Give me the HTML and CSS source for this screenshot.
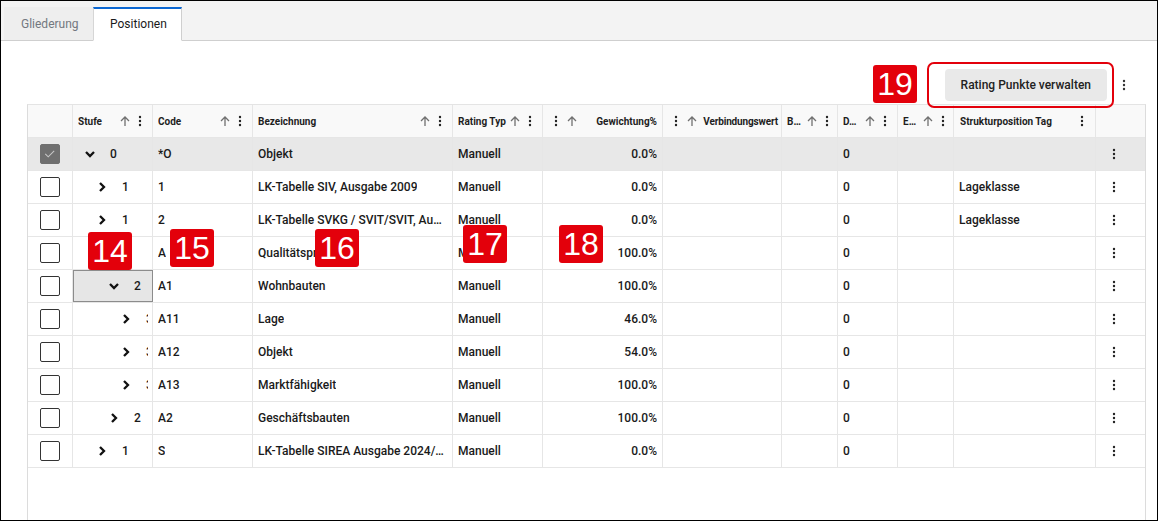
FILE: index.html
```html
<!DOCTYPE html>
<html lang="de">
<head>
<meta charset="utf-8">
<title>Positionen</title>
<link rel="stylesheet" href="styles.css">
</head>
<body>
<div class="frame">
  <div class="tabbar">
    <div class="tab">Gliederung</div>
    <div class="tab active">Positionen</div>
  </div>
  <div class="content">
    <div class="toolbar">
      <button class="btn">Rating Punkte verwalten</button>
      <span class="tool-kebab"><svg width="4" height="12" viewBox="0 0 4 12"><circle cx="2" cy="2" r="1.2"/><circle cx="2" cy="6" r="1.2"/><circle cx="2" cy="10" r="1.2"/></svg></span>
    </div>
    <div class="grid">
      <div class="row head">
        <div class="hc"></div>
        <div class="hc"><span class="hl">Stufe</span><span class="ha"><svg viewBox="0 0 12 12"><path d="M6 11V2M2 6l4-4 4 4"/></svg></span><span class="hk"><svg viewBox="0 0 4 12"><circle cx="2" cy="2" r="1.2"/><circle cx="2" cy="6" r="1.2"/><circle cx="2" cy="10" r="1.2"/></svg></span></div>
        <div class="hc"><span class="hl">Code</span><span class="ha"><svg viewBox="0 0 12 12"><path d="M6 11V2M2 6l4-4 4 4"/></svg></span><span class="hk"><svg viewBox="0 0 4 12"><circle cx="2" cy="2" r="1.2"/><circle cx="2" cy="6" r="1.2"/><circle cx="2" cy="10" r="1.2"/></svg></span></div>
        <div class="hc"><span class="hl">Bezeichnung</span><span class="ha"><svg viewBox="0 0 12 12"><path d="M6 11V2M2 6l4-4 4 4"/></svg></span><span class="hk"><svg viewBox="0 0 4 12"><circle cx="2" cy="2" r="1.2"/><circle cx="2" cy="6" r="1.2"/><circle cx="2" cy="10" r="1.2"/></svg></span></div>
        <div class="hc"><span class="hl">Rating Typ</span><span class="ha"><svg viewBox="0 0 12 12"><path d="M6 11V2M2 6l4-4 4 4"/></svg></span><span class="hk"><svg viewBox="0 0 4 12"><circle cx="2" cy="2" r="1.2"/><circle cx="2" cy="6" r="1.2"/><circle cx="2" cy="10" r="1.2"/></svg></span></div>
        <div class="hc num"><span class="hk"><svg viewBox="0 0 4 12"><circle cx="2" cy="2" r="1.2"/><circle cx="2" cy="6" r="1.2"/><circle cx="2" cy="10" r="1.2"/></svg></span><span class="ha"><svg viewBox="0 0 12 12"><path d="M6 11V2M2 6l4-4 4 4"/></svg></span><span class="hl">Gewichtung%</span></div>
        <div class="hc num snug"><span class="hk"><svg viewBox="0 0 4 12"><circle cx="2" cy="2" r="1.2"/><circle cx="2" cy="6" r="1.2"/><circle cx="2" cy="10" r="1.2"/></svg></span><span class="ha"><svg viewBox="0 0 12 12"><path d="M6 11V2M2 6l4-4 4 4"/></svg></span><span class="hl">Verbindungswert</span></div>
        <div class="hc tight"><span class="hl">B…</span><span class="ha"><svg viewBox="0 0 12 12"><path d="M6 11V2M2 6l4-4 4 4"/></svg></span><span class="hk"><svg viewBox="0 0 4 12"><circle cx="2" cy="2" r="1.2"/><circle cx="2" cy="6" r="1.2"/><circle cx="2" cy="10" r="1.2"/></svg></span></div>
        <div class="hc"><span class="hl">D…</span><span class="ha"><svg viewBox="0 0 12 12"><path d="M6 11V2M2 6l4-4 4 4"/></svg></span><span class="hk"><svg viewBox="0 0 4 12"><circle cx="2" cy="2" r="1.2"/><circle cx="2" cy="6" r="1.2"/><circle cx="2" cy="10" r="1.2"/></svg></span></div>
        <div class="hc tight"><span class="hl">E…</span><span class="ha"><svg viewBox="0 0 12 12"><path d="M6 11V2M2 6l4-4 4 4"/></svg></span><span class="hk"><svg viewBox="0 0 4 12"><circle cx="2" cy="2" r="1.2"/><circle cx="2" cy="6" r="1.2"/><circle cx="2" cy="10" r="1.2"/></svg></span></div>
        <div class="hc wide"><span class="hl">Strukturposition Tag</span><span class="hk"><svg viewBox="0 0 4 12"><circle cx="2" cy="2" r="1.2"/><circle cx="2" cy="6" r="1.2"/><circle cx="2" cy="10" r="1.2"/></svg></span></div>
        <div class="hc last"></div>
      </div>

      <div class="row sel">
        <div class="c cb"><span class="check on"><svg viewBox="0 0 20 20"><path d="M5 10.5l3.5 3.5 7-7"/></svg></span></div>
        <div class="c stufe"><div class="sw l0"><span class="chev"><svg viewBox="0 0 12 12"><path d="M2 4l4 4 4-4"/></svg></span><span class="lvl">0</span></div></div>
        <div class="c"><span class="t">*O</span></div>
        <div class="c"><span class="t">Objekt</span></div>
        <div class="c"><span class="t">Manuell</span></div>
        <div class="c r"><span class="t">0.0%</span></div>
        <div class="c"></div>
        <div class="c"></div>
        <div class="c"><span class="t">0</span></div>
        <div class="c"></div>
        <div class="c"></div>
        <div class="c act"><svg viewBox="0 0 4 12"><circle cx="2" cy="2" r="1.2"/><circle cx="2" cy="6" r="1.2"/><circle cx="2" cy="10" r="1.2"/></svg></div>
      </div>

      <div class="row">
        <div class="c cb"><span class="check"></span></div>
        <div class="c stufe"><div class="sw l1"><span class="chev"><svg viewBox="0 0 12 12"><path d="M4 2l4 4-4 4"/></svg></span><span class="lvl">1</span></div></div>
        <div class="c"><span class="t">1</span></div>
        <div class="c"><span class="t">LK-Tabelle SIV, Ausgabe 2009</span></div>
        <div class="c"><span class="t">Manuell</span></div>
        <div class="c r"><span class="t">0.0%</span></div>
        <div class="c"></div>
        <div class="c"></div>
        <div class="c"><span class="t">0</span></div>
        <div class="c"></div>
        <div class="c"><span class="t">Lageklasse</span></div>
        <div class="c act"><svg viewBox="0 0 4 12"><circle cx="2" cy="2" r="1.2"/><circle cx="2" cy="6" r="1.2"/><circle cx="2" cy="10" r="1.2"/></svg></div>
      </div>

      <div class="row">
        <div class="c cb"><span class="check"></span></div>
        <div class="c stufe"><div class="sw l1"><span class="chev"><svg viewBox="0 0 12 12"><path d="M4 2l4 4-4 4"/></svg></span><span class="lvl">1</span></div></div>
        <div class="c"><span class="t">2</span></div>
        <div class="c"><span class="t">LK-Tabelle SVKG / SVIT/SVIT, Ausgabe 2012</span></div>
        <div class="c"><span class="t">Manuell</span></div>
        <div class="c r"><span class="t">0.0%</span></div>
        <div class="c"></div>
        <div class="c"></div>
        <div class="c"><span class="t">0</span></div>
        <div class="c"></div>
        <div class="c"><span class="t">Lageklasse</span></div>
        <div class="c act"><svg viewBox="0 0 4 12"><circle cx="2" cy="2" r="1.2"/><circle cx="2" cy="6" r="1.2"/><circle cx="2" cy="10" r="1.2"/></svg></div>
      </div>

      <div class="row">
        <div class="c cb"><span class="check"></span></div>
        <div class="c stufe"><div class="sw l1"><span class="chev"><svg viewBox="0 0 12 12"><path d="M2 4l4 4 4-4"/></svg></span><span class="lvl">1</span></div></div>
        <div class="c"><span class="t">A</span></div>
        <div class="c"><span class="t">Qualitätsprofil</span></div>
        <div class="c"><span class="t">Manuell</span></div>
        <div class="c r"><span class="t">100.0%</span></div>
        <div class="c"></div>
        <div class="c"></div>
        <div class="c"><span class="t">0</span></div>
        <div class="c"></div>
        <div class="c"></div>
        <div class="c act"><svg viewBox="0 0 4 12"><circle cx="2" cy="2" r="1.2"/><circle cx="2" cy="6" r="1.2"/><circle cx="2" cy="10" r="1.2"/></svg></div>
      </div>

      <div class="row">
        <div class="c cb"><span class="check"></span></div>
        <div class="c stufe focus"><div class="sw l2"><span class="chev"><svg viewBox="0 0 12 12"><path d="M2 4l4 4 4-4"/></svg></span><span class="lvl">2</span></div></div>
        <div class="c"><span class="t">A1</span></div>
        <div class="c"><span class="t">Wohnbauten</span></div>
        <div class="c"><span class="t">Manuell</span></div>
        <div class="c r"><span class="t">100.0%</span></div>
        <div class="c"></div>
        <div class="c"></div>
        <div class="c"><span class="t">0</span></div>
        <div class="c"></div>
        <div class="c"></div>
        <div class="c act"><svg viewBox="0 0 4 12"><circle cx="2" cy="2" r="1.2"/><circle cx="2" cy="6" r="1.2"/><circle cx="2" cy="10" r="1.2"/></svg></div>
      </div>

      <div class="row">
        <div class="c cb"><span class="check"></span></div>
        <div class="c stufe"><div class="sw l3"><span class="chev"><svg viewBox="0 0 12 12"><path d="M4 2l4 4-4 4"/></svg></span><span class="lvl">3</span></div></div>
        <div class="c"><span class="t">A11</span></div>
        <div class="c"><span class="t">Lage</span></div>
        <div class="c"><span class="t">Manuell</span></div>
        <div class="c r"><span class="t">46.0%</span></div>
        <div class="c"></div>
        <div class="c"></div>
        <div class="c"><span class="t">0</span></div>
        <div class="c"></div>
        <div class="c"></div>
        <div class="c act"><svg viewBox="0 0 4 12"><circle cx="2" cy="2" r="1.2"/><circle cx="2" cy="6" r="1.2"/><circle cx="2" cy="10" r="1.2"/></svg></div>
      </div>

      <div class="row">
        <div class="c cb"><span class="check"></span></div>
        <div class="c stufe"><div class="sw l3"><span class="chev"><svg viewBox="0 0 12 12"><path d="M4 2l4 4-4 4"/></svg></span><span class="lvl">3</span></div></div>
        <div class="c"><span class="t">A12</span></div>
        <div class="c"><span class="t">Objekt</span></div>
        <div class="c"><span class="t">Manuell</span></div>
        <div class="c r"><span class="t">54.0%</span></div>
        <div class="c"></div>
        <div class="c"></div>
        <div class="c"><span class="t">0</span></div>
        <div class="c"></div>
        <div class="c"></div>
        <div class="c act"><svg viewBox="0 0 4 12"><circle cx="2" cy="2" r="1.2"/><circle cx="2" cy="6" r="1.2"/><circle cx="2" cy="10" r="1.2"/></svg></div>
      </div>

      <div class="row">
        <div class="c cb"><span class="check"></span></div>
        <div class="c stufe"><div class="sw l3"><span class="chev"><svg viewBox="0 0 12 12"><path d="M4 2l4 4-4 4"/></svg></span><span class="lvl">3</span></div></div>
        <div class="c"><span class="t">A13</span></div>
        <div class="c"><span class="t">Marktfähigkeit</span></div>
        <div class="c"><span class="t">Manuell</span></div>
        <div class="c r"><span class="t">100.0%</span></div>
        <div class="c"></div>
        <div class="c"></div>
        <div class="c"><span class="t">0</span></div>
        <div class="c"></div>
        <div class="c"></div>
        <div class="c act"><svg viewBox="0 0 4 12"><circle cx="2" cy="2" r="1.2"/><circle cx="2" cy="6" r="1.2"/><circle cx="2" cy="10" r="1.2"/></svg></div>
      </div>

      <div class="row">
        <div class="c cb"><span class="check"></span></div>
        <div class="c stufe"><div class="sw l2"><span class="chev"><svg viewBox="0 0 12 12"><path d="M4 2l4 4-4 4"/></svg></span><span class="lvl">2</span></div></div>
        <div class="c"><span class="t">A2</span></div>
        <div class="c"><span class="t">Geschäftsbauten</span></div>
        <div class="c"><span class="t">Manuell</span></div>
        <div class="c r"><span class="t">100.0%</span></div>
        <div class="c"></div>
        <div class="c"></div>
        <div class="c"><span class="t">0</span></div>
        <div class="c"></div>
        <div class="c"></div>
        <div class="c act"><svg viewBox="0 0 4 12"><circle cx="2" cy="2" r="1.2"/><circle cx="2" cy="6" r="1.2"/><circle cx="2" cy="10" r="1.2"/></svg></div>
      </div>

      <div class="row">
        <div class="c cb"><span class="check"></span></div>
        <div class="c stufe"><div class="sw l1"><span class="chev"><svg viewBox="0 0 12 12"><path d="M4 2l4 4-4 4"/></svg></span><span class="lvl">1</span></div></div>
        <div class="c"><span class="t">S</span></div>
        <div class="c"><span class="t">LK-Tabelle SIREA Ausgabe 2024/2025</span></div>
        <div class="c"><span class="t">Manuell</span></div>
        <div class="c r"><span class="t">0.0%</span></div>
        <div class="c"></div>
        <div class="c"></div>
        <div class="c"><span class="t">0</span></div>
        <div class="c"></div>
        <div class="c"></div>
        <div class="c act"><svg viewBox="0 0 4 12"><circle cx="2" cy="2" r="1.2"/><circle cx="2" cy="6" r="1.2"/><circle cx="2" cy="10" r="1.2"/></svg></div>
      </div>
    </div>
  </div>

  <div class="mark-box"></div>
  <div class="badge b14">14</div>
  <div class="badge b15">15</div>
  <div class="badge b16">16</div>
  <div class="badge b17">17</div>
  <div class="badge b18">18</div>
  <div class="badge b19">19</div>
</div>
</body>
</html>
```

FILE: styles.css
```css
* { box-sizing: border-box; }

html, body {
  margin: 0;
  padding: 0;
  background: #fff;
}

body {
  font-family: Roboto, "Liberation Sans", Arial, sans-serif;
  color: #1c1c1c;
}

.frame {
  position: relative;
  width: 1158px;
  height: 521px;
  border: 1px solid #000;
  overflow: hidden;
  display: flex;
  flex-direction: column;
  background: #fff;
}

/* Tabs */
.tabbar {
  height: 40px;
  flex: none;
  display: flex;
  align-items: flex-end;
  padding-left: 3px;
  background: #f3f3f3;
  border-bottom: 1px solid #cfcfcf;
}

.tab {
  width: 89px;
  height: 34px;
  margin-bottom: -1px;
  padding: 0 0 0 17px;
  display: flex;
  align-items: center;
  font-size: 12px;
  color: #737880;
  background: #eeeeee;
  border-bottom: 1px solid #cfcfcf;
  white-space: nowrap;
}

.tab.active {
  color: #1a1a1a;
  background: #fff;
  border-top: 2px solid #0b67d2;
  border-left: 1px solid #d6d6d6;
  border-right: 1px solid #cfcfcf;
  border-bottom: 1px solid #fff;
  padding-left: 16px;
  padding-bottom: 2px;
}

/* Content */
.content {
  flex: 1;
  display: flex;
  flex-direction: column;
  padding-left: 26px;
  min-height: 0;
}

.toolbar {
  width: 1119px;
  height: 63px;
  flex: none;
  display: flex;
  justify-content: flex-end;
  align-items: flex-end;
  padding: 0 16px 3px 0;
}

.btn {
  height: 32px;
  padding: 0 16px;
  border: none;
  border-radius: 4px;
  background: #e9e9e9;
  font-family: Roboto, "Liberation Sans", sans-serif;
  font-size: 12px;
  font-weight: 500;
  color: #222;
}

.tool-kebab {
  width: 12px;
  height: 32px;
  margin-left: 11px;
  display: flex;
  align-items: center;
  justify-content: center;
}

.tool-kebab svg { fill: #333; }

/* Grid */
.grid {
  flex: 1;
  width: 1119px;
  border-left: 1px solid #dcdcdc;
  border-right: 1px solid #dcdcdc;
  border-top: 1px solid #e4e4e4;
}

.row {
  display: grid;
  grid-template-columns: 45px 80px 100px 200px 90px 120px 119px 56px 60px 56px 142px 49px;
  height: 33px;
  border-bottom: 1px solid #e6e6e6;
}

.row.head { background: #f9f9f9; }
.row.sel { background: #e8e8e8; }

.hc, .c {
  min-width: 0;
  display: flex;
  align-items: center;
  border-right: 1px solid #e6e6e6;
  white-space: nowrap;
  overflow: hidden;
}

.hc.last, .c.act { border-right: none; }

.hc {
  padding: 0 10px 0 5px;
  font-size: 10px;
  font-weight: 700;
  color: #1e1e1e;
}

.hl {
  flex: 1;
  min-width: 0;
  overflow: hidden;
  text-overflow: ellipsis;
  white-space: nowrap;
}

.ha {
  width: 12px;
  height: 12px;
  flex: none;
  margin-right: 7px;
  display: flex;
}

.ha svg {
  width: 12px;
  height: 12px;
  fill: none;
  stroke: #707070;
  stroke-width: 1.3;
}

.hk {
  width: 4px;
  height: 12px;
  flex: none;
  display: flex;
}

.hk svg {
  width: 4px;
  height: 12px;
  fill: #222;
}

.hc.tight { padding-right: 8px; }
.hc.wide { padding-left: 6px; padding-right: 11px; }

.hc.num { padding: 0 5px 0 11px; }
.hc.num .hk { margin-right: 8px; }
.hc.num .ha { margin-right: 2px; }
.hc.num .hl { text-align: right; }

.hc.num.snug { padding-right: 3px; }
.hc.num.snug .ha { margin-right: 1px; }
.hc.num.snug .hl {
  flex: 1 0 auto;
  overflow: visible;
  text-overflow: clip;
  letter-spacing: -0.15px;
}

/* Cells */
.c {
  padding: 0 5px;
  font-size: 12px;
  font-weight: 500;
  color: #1a1a1a;
}

.c .t {
  min-width: 0;
  overflow: hidden;
  text-overflow: ellipsis;
  white-space: nowrap;
}

.c.r { justify-content: flex-end; }

.c.cb { justify-content: center; padding: 0; }

.check {
  width: 20px;
  height: 20px;
  border: 1.5px solid #333;
  border-radius: 2px;
  background: #fff;
  display: block;
}

.check.on {
  background: #6f6f6f;
  border-color: #6f6f6f;
}

.check svg {
  display: block;
  width: 17px;
  height: 17px;
  fill: none;
  stroke: #c8c8c8;
  stroke-width: 1.2;
}

.c.stufe { padding: 0 4px 0 0; }

.c.stufe.focus {
  background: #e6e6e6;
  outline: 1px solid #8c8c8c;
  outline-offset: -1px;
}

.sw {
  width: 100%;
  display: flex;
  align-items: center;
  overflow: hidden;
}

.sw.l0 { padding-left: 11px; }
.sw.l1 { padding-left: 23px; }
.sw.l2 { padding-left: 35px; }
.sw.l3 { padding-left: 47px; }

.chev {
  width: 12px;
  height: 12px;
  flex: none;
  display: flex;
}

.chev svg {
  width: 12px;
  height: 12px;
  fill: none;
  stroke: #111;
  stroke-width: 2.3;
}

.lvl {
  margin-left: 14px;
  flex: none;
}

.c.act { padding-left: 16px; }

.c.act svg {
  width: 4px;
  height: 12px;
  fill: #222;
}

/* Annotations */
.badge {
  position: absolute;
  width: 44px;
  height: 38px;
  border-radius: 3px;
  background: #e3000b;
  color: #fff;
  font-family: "Liberation Sans", Arial, sans-serif;
  font-size: 32px;
  line-height: 1;
  display: flex;
  align-items: center;
  justify-content: center;
}

.b14 { left: 87px; top: 231px; }
.b15 { left: 169px; top: 228px; }
.b16 { left: 314px; top: 228px; }
.b17 { left: 462px; top: 224px; }
.b18 { left: 558px; top: 224px; }
.b19 { left: 872px; top: 64px; }

.mark-box {
  position: absolute;
  left: 926px;
  top: 61px;
  width: 187px;
  height: 46px;
  border: 2px solid #e3000b;
  border-radius: 7px;
}
```
